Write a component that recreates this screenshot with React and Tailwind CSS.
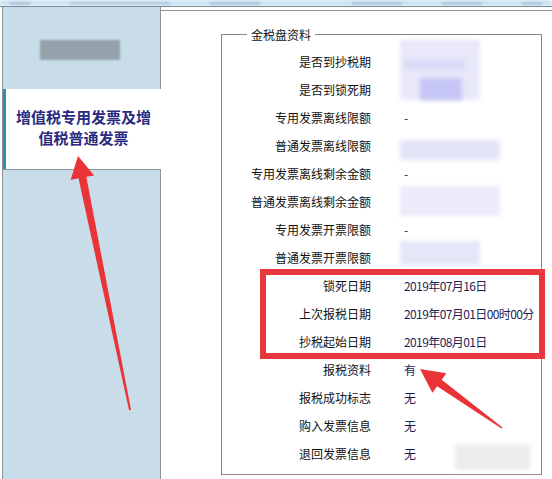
import React from "react";

const rows = [
  ["是否到抄税期", ""],
  ["是否到锁死期", ""],
  ["专用发票离线限额", "-"],
  ["普通发票离线限额", ""],
  ["专用发票离线剩余金额", "-"],
  ["普通发票离线剩余金额", ""],
  ["专用发票开票限额", "-"],
  ["普通发票开票限额", ""],
  ["锁死日期", "2019年07月16日"],
  ["上次报税日期", "2019年07月01日00时00分"],
  ["抄税起始日期", "2019年08月01日"],
  ["报税资料", "有"],
  ["报税成功标志", "无"],
  ["购入发票信息", "无"],
  ["退回发票信息", "无"],
];

export default function App() {
  return (
    <div className="w-[552px] h-[479px] relative overflow-hidden bg-white font-['Noto_Sans_CJK_SC','Noto_Sans',sans-serif]">
      {/* top strip */}
      <div className="h-[6px] bg-[#cfe4f3] flex items-center gap-[40px] px-[10px] blur-[1px]">
        <div className="w-[20px] h-[3px] bg-[#a9c3d8]" />
        <div className="w-[100px] h-[3px] bg-[#b3cadd]" />
        <div className="w-[50px] h-[3px] bg-[#aec6da]" />
        <div className="flex-1" />
        <div className="w-[50px] h-[3px] bg-[#aec6da]" />
        <div className="w-[40px] h-[3px] bg-[#aec6da]" />
        <div className="w-[20px] h-[3px] bg-[#aec6da]" />
      </div>
      <div className="h-px bg-[#59606a]" />
      <div className="flex h-[472px]">
        <aside className="w-[159px] ml-[2px] flex flex-col border-l border-[#8d939b]">
          <div className="h-[82px] bg-[#c9dcea] border-r border-[#8d939b] pt-[33px] pl-[37px]">
            <div className="w-[80px] h-[20px] bg-[#95a1ab] blur-[1px]" />
          </div>
          <div className="h-[80px] bg-white border-l-[3px] border-[#2c93ad] flex items-center justify-center text-center text-[15px] leading-[21px] font-bold text-[#2a2a80] pb-[4px]">
            <div>
              增值税专用发票及增
              <br />
              值税普通发票
            </div>
          </div>
          <div className="flex-1 bg-[#c9dcea] border-r border-t border-[#8d939b]" />
        </aside>
        <main className="flex-1 mt-[3px] border-t border-[#8d939b]">
          <fieldset className="ml-[60px] mt-[15px] w-[321px] h-[449px] border border-[#8a8a8a]">
            <legend className="ml-[25px] px-[4px] text-[12px] leading-[17px] text-[#111]">金税盘资料</legend>
            <div className="pt-[5px] flex flex-col text-[12px]">
              {rows.map(([label, value]) => (
                <div key={label} className="h-[28px] flex items-center">
                  <div className="w-[149px] text-right text-[#111]">{label}</div>
                  <div className="ml-[33px] text-[#1d1d55] whitespace-nowrap tracking-[-0.6px]">{value}</div>
                </div>
              ))}
            </div>
          </fieldset>
        </main>
      </div>

      {/* blurred values */}
      <div className="absolute left-[400px] top-[40px] w-[80px] h-[60px] bg-[#e8e8fa] blur-[2px]" />
      <div className="absolute left-[405px] top-[60px] w-[60px] h-[10px] bg-[#dadaf6] blur-[2px]" />
      <div className="absolute left-[420px] top-[78px] w-[42px] h-[22px] bg-[#c6c6f6] blur-[2px]" />
      <div className="absolute left-[400px] top-[140px] w-[100px] h-[20px] bg-[#e3e3f8] blur-[2px]" />
      <div className="absolute left-[400px] top-[186px] w-[100px] h-[30px] bg-[#ebebfa] blur-[2px]" />
      <div className="absolute left-[400px] top-[241px] w-[80px] h-[24px] bg-[#e6e6f9] blur-[2px]" />
      <div className="absolute left-[455px] top-[444px] w-[75px] h-[26px] bg-[#ececef] blur-[2px]" />

      {/* red highlight box */}
      <div className="absolute left-[260px] top-[269px] w-[285px] h-[90px] border-[6px] border-[#e8383d]" />

      {/* arrows */}
      <svg className="absolute inset-0 pointer-events-none" width="552" height="479" viewBox="0 0 552 479">
        <polygon
          points="78,156 94.2,175.5 86.3,176.7 131,410 129,410 78.5,178.3 70.6,180"
          fill="#ea3336"
        />
        <polygon
          points="420,369 446.4,373.3 441.7,379.8 502.5,427.5 501.5,428.5 437.1,386.2 432.4,392.7"
          fill="#ea3336"
        />
      </svg>
    </div>
  );
}
